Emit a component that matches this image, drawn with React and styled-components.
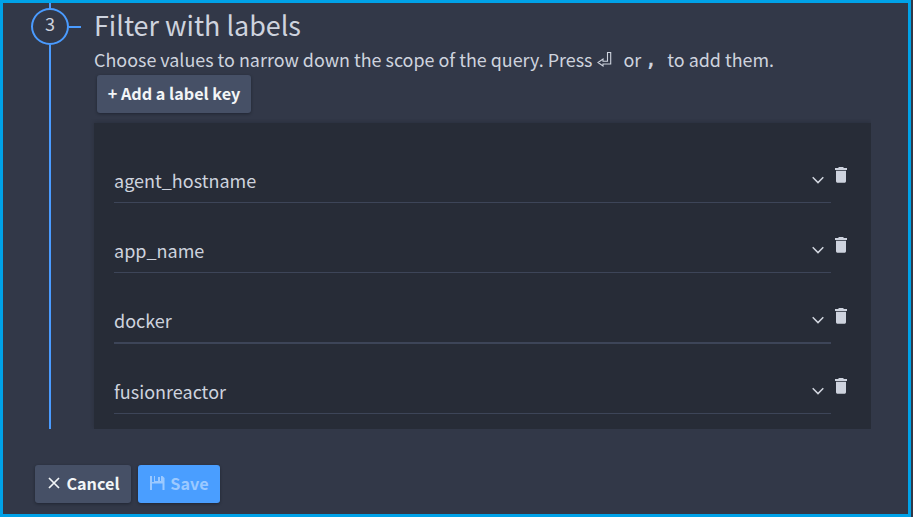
import React from "react";
import styled, { createGlobalStyle } from "styled-components";

const GlobalStyle = createGlobalStyle`
  * { box-sizing: border-box; }
  body {
    margin: 0;
    background: #313847;
    font-family: "Source Sans Pro", "Noto Sans CJK SC", "Noto Sans", sans-serif;
    color: #ced3de;
  }
`;

const Frame = styled.main`
  width: 911px;
  height: 517px;
  border: 3px solid #00a2e8;
  background: #323848;
  overflow: hidden;
`;

const Step = styled.section`
  display: flex;
  height: 426px;
`;

const Rail = styled.div`
  display: flex;
  flex-direction: column;
  align-items: center;
  flex: none;
  width: 38px;
  margin-left: 28px;
`;

const RailLine = styled.div`
  width: 2px;
  height: ${(p) => p.$height || "auto"};
  flex: ${(p) => (p.$height ? "none" : 1)};
  background: #4a9bff;
`;

const StepNumber = styled.div`
  display: flex;
  justify-content: center;
  width: 38px;
  height: 37px;
  border: 2px solid #4a9bff;
  border-radius: 50%;
  font-size: 18px;
  line-height: 27px;
`;

const Tick = styled.div`
  flex: none;
  width: 12px;
  height: 2px;
  margin-top: 23px;
  background: #4a9bff;
`;

const Content = styled.div`
  flex: none;
  width: 777px;
  margin-left: 13px;
`;

const Title = styled.h2`
  margin: 0;
  height: 42px;
  font-size: 26.9px;
  font-weight: 400;
  line-height: 44px;
  white-space: nowrap;
`;

const Hint = styled.p`
  display: flex;
  align-items: center;
  margin: 0;
  height: 30px;
  padding-bottom: 2px;
  font-size: 17.92px;
  line-height: 28px;
  white-space: pre;
`;

const EnterIcon = styled.svg`
  flex: none;
  width: 15px;
  height: 16px;
  margin: 0 11px 0 5px;
`;

const Comma = styled.kbd`
  width: 17px;
  margin: 0 5px 0 4px;
  font-family: "DejaVu Sans Mono", monospace;
  font-size: 19px;
  font-weight: 700;
`;

const Button = styled.button`
  display: flex;
  align-items: center;
  justify-content: center;
  width: ${(p) => p.$width};
  height: 38px;
  padding: 0 0 2px;
  border: 0;
  border-radius: 3px;
  background: ${(p) => (p.$primary ? "#4a9eff" : "#465066")};
  color: ${(p) => (p.$primary ? "#9bc9ff" : "#f2f5f7")};
  box-shadow: 0 1px 3px rgba(10, 15, 25, 0.45);
  font: 700 16.2px/36px "Source Sans Pro", "Noto Sans CJK SC", sans-serif;
  white-space: pre;
`;

const AddRow = styled.div`
  padding-left: 3px;
  height: 48px;
`;

const Labels = styled.div`
  height: 306px;
  padding: 10px 20px 0;
  background: #272c37;
  box-shadow: 0 -1px 4px rgba(20, 24, 32, 0.25);
  clip-path: inset(-4px 0 0 -4px);
`;

const LabelRow = styled.div`
  display: flex;
  height: ${(p) => (p.$strong ? "71px" : "70px")};
  align-items: flex-start;
`;

const Select = styled.div`
  display: flex;
  justify-content: space-between;
  width: 717px;
  height: 100%;
  padding: 34px 6px 0 0;
  border-bottom: ${(p) => (p.$strong ? "2px" : "1px")} solid #3d4558;
  font-size: 18px;
  line-height: 27px;
`;

const Chevron = styled.svg`
  width: 14px;
  height: 10px;
  margin-top: 8px;
`;

const Trash = styled.svg`
  width: 12px;
  height: 16px;
  margin: ${(p) => (p.$strong ? "35px" : "34px")} 0 0 4px;
`;

const Actions = styled.footer`
  display: flex;
  gap: 7px;
  padding: 36px 0 0 32px;
`;

const CloseIcon = styled.svg`
  width: 12px;
  height: 12px;
  margin: 0 6px 0 2px;
`;

const SaveIcon = styled.svg`
  width: 15px;
  height: 14px;
  margin: 0 5px 0 1px;
`;

const LABELS = [
  { name: "agent_hostname" },
  { name: "app_name" },
  { name: "docker", strong: true },
  { name: "fusionreactor" },
];

function LabelField({ name, strong }) {
  return (
    <LabelRow $strong={strong}>
      <Select $strong={strong}>
        <span>{name}</span>
        <Chevron viewBox="0 0 14 10" fill="none" stroke="#d2d6df" strokeWidth="1.5">
          <path d="M1.7 2.3 7 7.6l5.3-5.3" />
        </Chevron>
      </Select>
      <Trash viewBox="0 0 12 16" fill="#ced3de" $strong={strong}>
        <path d="M3.5 0h5v1H12v2H0V1h3.5zM1 3.7h10v10.6q0 1.4-1.2 1.4H2.2Q1 15.7 1 14.3z" />
      </Trash>
    </LabelRow>
  );
}

export default function App() {
  return (
    <>
      <GlobalStyle />
      <Frame>
        <Step>
          <Rail>
            <RailLine $height="5px" />
            <StepNumber>3</StepNumber>
            <RailLine />
          </Rail>
          <Tick />
          <Content>
            <Title>Filter with labels</Title>
            <Hint>
              <span>Choose values to narrow down the scope of the query. Press</span>
              <EnterIcon viewBox="0 0 15 16" fill="none" stroke="#ced3de" strokeWidth="1.1">
                <path d="M10.5 1.5h3.2V13H6v2L1 11.5 6 8v2.2h4.5z" />
              </EnterIcon>
              <span>or</span>
              <Comma>,</Comma>
              <span>to add them.</span>
            </Hint>
            <AddRow>
              <Button $width="154px">+ Add a label key</Button>
            </AddRow>
            <Labels>
              {LABELS.map((label) => (
                <LabelField key={label.name} {...label} />
              ))}
            </Labels>
          </Content>
        </Step>
        <Actions>
          <Button $width="96px">
            <CloseIcon viewBox="0 0 12 12" stroke="currentColor" strokeWidth="1.7">
              <path d="m1 1 10 10M11 1 1 11" />
            </CloseIcon>
            Cancel
          </Button>
          <Button $width="82px" $primary disabled>
            <SaveIcon viewBox="0 0 15 14" fill="currentColor">
              <path d="M0 0h2v6h2V0h1v5h3V1h2v4h1V0h1.500L14.500 2v12H12.500V7.500H2V14H0z" />
            </SaveIcon>
            Save
          </Button>
        </Actions>
      </Frame>
    </>
  );
}
